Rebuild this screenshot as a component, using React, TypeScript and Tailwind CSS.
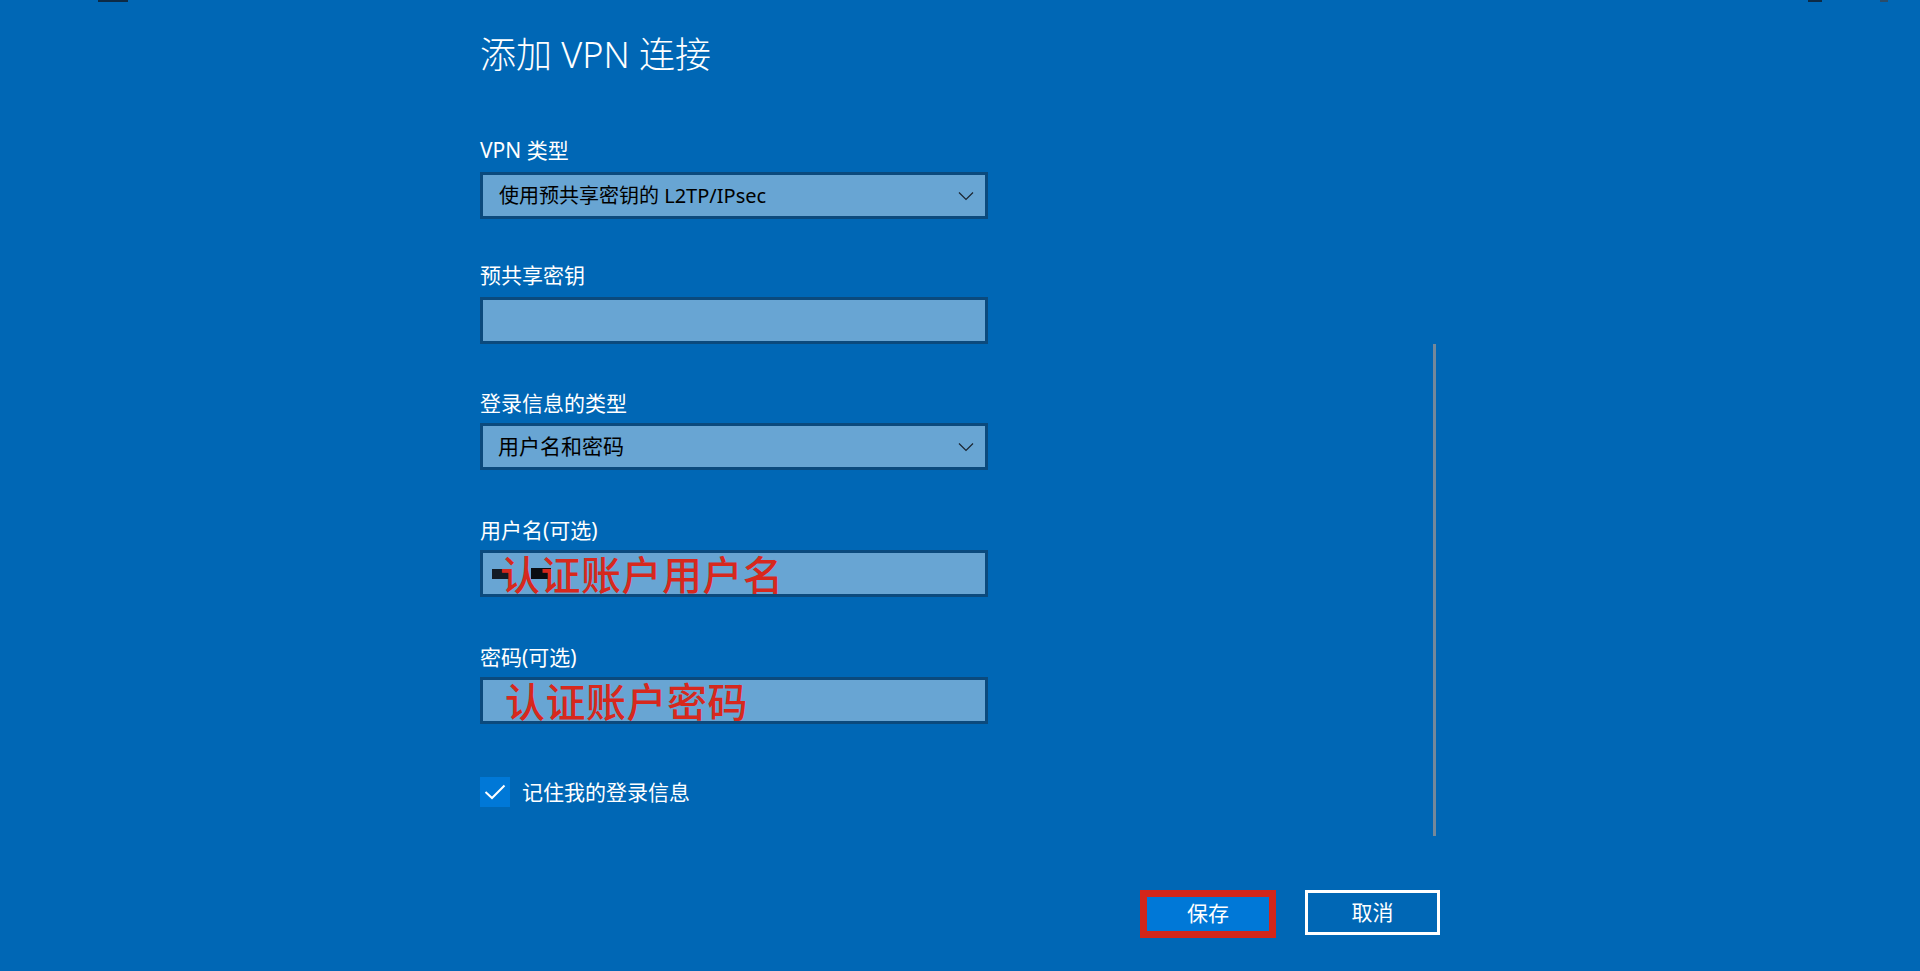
const font = "font-['Noto_Sans','Noto_Sans_CJK_SC',sans-serif]";

function Chevron() {
  return (
    <svg width="16" height="10" viewBox="0 0 16 10" className="shrink-0">
      <path d="M1 1.5 L8 8.5 L15 1.5" fill="none" stroke="#1b2430" strokeWidth="1.2" />
    </svg>
  );
}

function Label({ text, mt }: { text: string; mt: string }) {
  return <div className={`${mt} h-[28px] text-[21px] leading-[28px] text-white`}>{text}</div>;
}

export default function App() {
  return (
    <div className={`relative h-[971px] w-full overflow-hidden bg-[#0067b5] ${font}`}>
      {/* cut-off bits of the window chrome at the top edge */}
      <div className="absolute left-[98px] top-0 h-[2px] w-[30px] bg-[#0d2a45]" />
      <div className="absolute left-[1808px] top-0 h-[2px] w-[14px] bg-[#0d2a45]" />
      <div className="absolute left-[1880px] top-0 h-[2px] w-[8px] bg-[#2a4c6a]" />

      <div className="ml-[480px] flex w-[960px] flex-col">
        <div className="flex">
          <div className="flex w-[508px] flex-col">
            {/* Title */}
            <h1 className="mt-[33px] h-[44px] text-[36px] font-light leading-[44px] text-white">
              添加 VPN 连接
            </h1>

            {/* VPN type */}
            <Label text="VPN 类型" mt="mt-[59px]" />
            <div className="mt-[8px] flex h-[47px] items-center justify-between border-[3px] border-[#0b4a7d] bg-[#68a5d3] pl-[16px] pr-[11px] text-[20px] text-black">
              <span>使用预共享密钥的 L2TP/IPsec</span>
              <Chevron />
            </div>

            {/* Pre-shared key */}
            <Label text="预共享密钥" mt="mt-[42px]" />
            <div className="mt-[8px] h-[47px] border-[3px] border-[#0b4a7d] bg-[#68a5d3]" />

            {/* Sign-in info type */}
            <Label text="登录信息的类型" mt="mt-[45px]" />
            <div className="mt-[6px] flex h-[47px] items-center justify-between border-[3px] border-[#0b4a7d] bg-[#68a5d3] pl-[15px] pr-[11px] text-[21px] text-black">
              <span>用户名和密码</span>
              <Chevron />
            </div>

            {/* Username */}
            <Label text="用户名(可选)" mt="mt-[46px]" />
            <div className="relative mt-[6px] flex h-[47px] items-center border-[3px] border-[#0b4a7d] bg-[#68a5d3] pl-[17px] pt-[3px]">
              <div className="absolute left-[9px] top-[16px] h-[10px] w-[18px] bg-[#141c26]" />
              <div className="absolute left-[48px] top-[15px] h-[11px] w-[20px] bg-[#0a0d12]" />
              <span className="relative text-[40px] font-medium leading-[42px] tracking-[0.5px] text-[#d7281d]">
                认证账户用户名
              </span>
            </div>

            {/* Password */}
            <Label text="密码(可选)" mt="mt-[46px]" />
            <div className="mt-[6px] flex h-[47px] items-center border-[3px] border-[#0b4a7d] bg-[#68a5d3] pl-[22px] pt-[2px]">
              <span className="text-[40px] font-medium leading-[42px] tracking-[0.5px] text-[#d7281d]">认证账户密码</span>
            </div>

            {/* Remember */}
            <div className="mt-[53px] flex items-center gap-[12px]">
              <div className="flex h-[30px] w-[30px] items-center justify-center bg-[#0078d7]">
                <svg width="22" height="16" viewBox="0 0 22 16">
                  <path d="M1.5 8 L8 14 L20.5 1.5" fill="none" stroke="white" strokeWidth="2" />
                </svg>
              </div>
              <span className="text-[21px] leading-[28px] text-white">记住我的登录信息</span>
            </div>
          </div>

          {/* Scrollbar */}
          <div className="ml-auto mr-[4px] mt-[344px] h-[492px] w-[3px] bg-[#74889a]" />
        </div>

        {/* Buttons */}
        <div className="mt-[54px] flex items-start justify-end gap-[29px]">
          <button className="flex h-[48px] w-[136px] items-center justify-center border-[7px] border-[#d3261a] bg-[#0078d7] text-[21px] text-white">
            保存
          </button>
          <button className="flex h-[45px] w-[135px] items-center justify-center border-[3px] border-white text-[21px] text-white">
            取消
          </button>
        </div>
      </div>
    </div>
  );
}
